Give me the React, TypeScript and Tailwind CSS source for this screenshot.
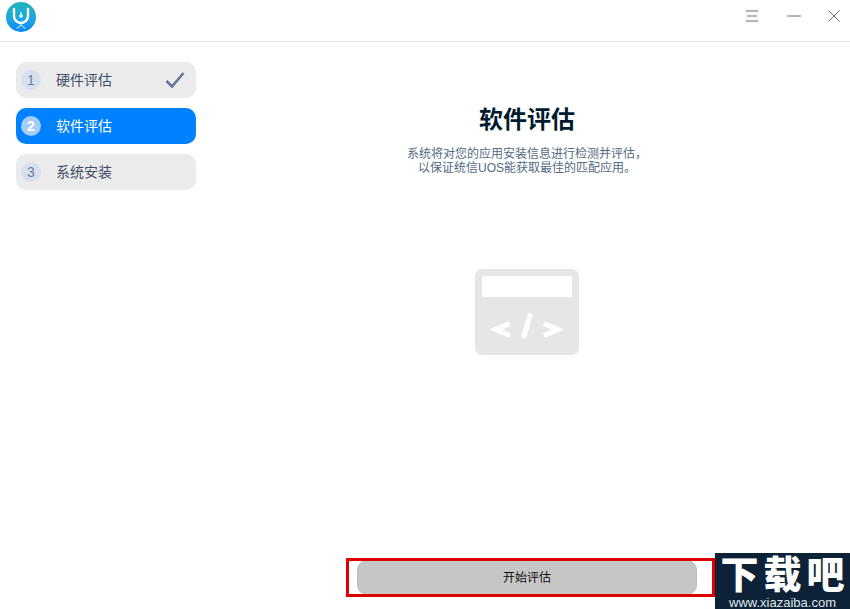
const steps = [
  { num: 1, label: '硬件评估', done: true },
  { num: 2, label: '软件评估', active: true },
  { num: 3, label: '系统安装' },
];

const Logo = () => (
  <svg width="30" height="30" viewBox="0 0 30 30">
    <defs>
      <linearGradient id="logoBg" x1="0" y1="0" x2="0" y2="1">
        <stop offset="0" stopColor="#1fb5b8" />
        <stop offset="0.6" stopColor="#1ea4e6" />
        <stop offset="1" stopColor="#0a84f5" />
      </linearGradient>
    </defs>
    <circle cx="15" cy="15" r="15" fill="url(#logoBg)" />
    <path d="M8 7v7a7 7 0 0 0 14 0V7" fill="none" stroke="#fff" strokeWidth="2.4" strokeLinecap="round" />
    <circle cx="15" cy="14" r="1.8" fill="#fff" />
    <path d="M15 10v2.5" stroke="#fff" strokeWidth="1.2" />
    <path d="M10.5 26.5Q15 24 15 22Q15 24 19.5 26.5" fill="none" stroke="#a5e3f5" strokeWidth="1.1" />
  </svg>
);

const StepItem = ({ num, label, done, active }: { num: number; label: string; done?: boolean; active?: boolean }) => (
  <div className={`flex items-center h-9 rounded-[10px] pl-[5px] pr-[11px] ${active ? 'bg-[#0081ff]' : 'bg-[#ebebeb]'}`}>
    <div
      className={`w-5 h-5 rounded-full flex items-center justify-center text-sm ${
        active ? 'bg-[#a3cdf8] text-white font-bold' : 'bg-[#d8e0ee] text-[#6b7ba0]'
      }`}
    >
      {num}
    </div>
    <span className={`ml-[15px] pt-[1px] text-[14px] flex-1 ${active ? 'text-white' : 'text-[#414d68]'}`}>{label}</span>
    {done && (
      <svg width="20" height="16" viewBox="0 0 20 16" fill="none">
        <path d="M1.5 9l5.5 5.5L18.5 1" stroke="#66749a" strokeWidth="2.6" />
      </svg>
    )}
  </div>
);

const App = () => {
  return (
    <div className="relative w-[850px] h-[609px] overflow-hidden bg-white flex flex-col font-['Liberation_Sans','Noto_Sans_CJK_SC',sans-serif]">
      <header className="h-[42px] shrink-0 border-b border-[#e6e6e6] flex items-center pl-[6px] pb-[9px] pt-[2px]">
        <Logo />
        <div className="ml-auto flex items-center text-[#666b78] -mt-[2px]">
          <svg width="12" height="12" viewBox="0 0 12 12" className="mr-[29px]" stroke="currentColor" strokeWidth="1">
            <path d="M0 1h12M1 6h10M0 11h12" />
          </svg>
          <svg width="14" height="2" viewBox="0 0 14 2" className="mr-[27px]" stroke="currentColor" strokeWidth="1">
            <path d="M0 1h14" />
          </svg>
          <svg width="12" height="12" viewBox="0 0 12 12" className="mr-[10px]" stroke="currentColor" strokeWidth="1">
            <path d="M0.5 0.5l11 11M11.5 0.5l-11 11" />
          </svg>
        </div>
      </header>
      <div className="flex flex-1 min-h-0">
        <aside className="w-[204px] shrink-0 pt-5 pl-4 pr-2 flex flex-col gap-[10px]">
          {steps.map((s) => (
            <StepItem key={s.num} {...s} />
          ))}
        </aside>
        <main className="flex-1 flex flex-col items-center">
          <h1 className="mt-[60px] text-2xl leading-[36px] font-bold text-[#001a2e]">软件评估</h1>
          <p className="mt-[9px] text-[12px] leading-[14px] text-[#526a7f] text-center">
            系统将对您的应用安装信息进行检测并评估，
            <br />
            以保证统信UOS能获取最佳的匹配应用。
          </p>
          <div className="mt-[94px] w-[104px] h-[86px] rounded-[7px] bg-[#e6e6e6] px-[7px] pt-[7px] flex flex-col">
            <div className="h-[21px] bg-white rounded-[1px]" />
            <svg width="90" height="36" viewBox="0 0 90 36" fill="none" className="mt-[10px]" stroke="#fff" strokeWidth="5">
              <path d="M28 16.5L14 22.5l14 6M62 16.5L76 22.5l-14 6" />
              <path d="M48 8.5L42 29" strokeLinecap="round" />
            </svg>
          </div>
          <div className="mt-auto mb-[14px]">
            <button className="w-[340px] h-[35px] rounded-[10px] bg-[#c6c6c6] text-[12px] text-[#111] border border-[#bdbdbd]">
              开始评估
            </button>
          </div>
        </main>
      </div>
      {/* red annotation box round the button */}
      <div className="absolute left-[346px] top-[558px] w-[369px] h-[39px] border-[3px] border-[#e00000] pointer-events-none" />
      {/* site watermark */}
      <div className="absolute right-0 bottom-0 w-[135px] h-[56px] bg-[#0e2237] flex flex-col items-center">
        <div className="text-[38px] leading-[44px] font-black text-white tracking-[5px] pl-[5px] whitespace-nowrap">
          下载吧
        </div>
        <div className="text-[13px] leading-[12px] text-[#dfe6ec] whitespace-nowrap">www.xiazaiba.com</div>
      </div>
    </div>
  );
};

export default App;
